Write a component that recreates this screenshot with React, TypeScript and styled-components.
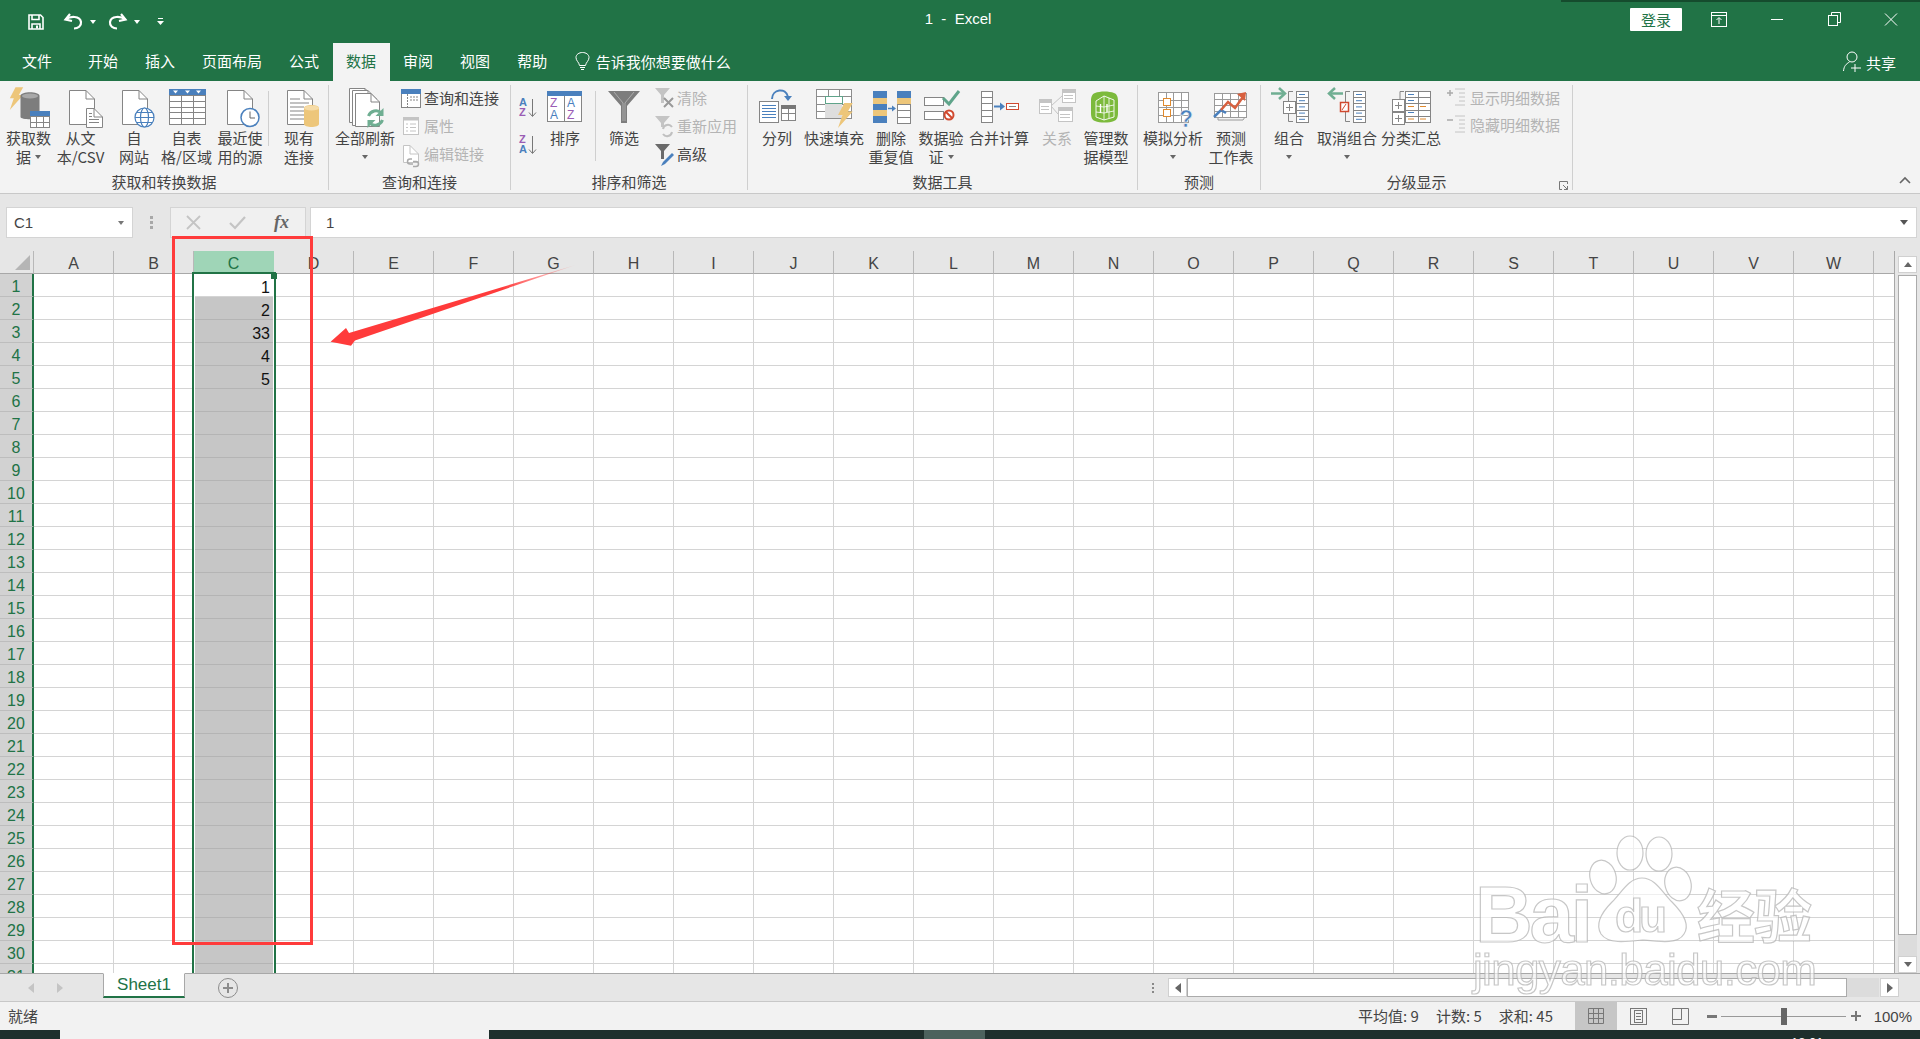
import React from 'react';
import styled, { createGlobalStyle } from 'styled-components';

const GlobalStyle = createGlobalStyle`
  html, body {
    margin: 0;
    padding: 0;
    background: #e6e6e6;
  }
  * {
    box-sizing: border-box;
  }
`;

const FONT = `"Noto Sans CJK SC", "Liberation Sans", sans-serif`;
const LATIN = `"Liberation Sans", "Noto Sans CJK SC", sans-serif`;
const GREEN = '#217346';
const BLUE = '#4a80bd';
const LINE = '#858585';
const ORANGE = '#edc67a';
const FADED = '#c4c4c4';

const Page = styled.div`
  position: relative;
  width: 1920px;
  height: 1039px;
  overflow: hidden;
  display: flex;
  flex-direction: column;
  font-family: ${FONT};
  font-size: 15px;
  color: #444;
  background: #e6e6e6;
`;

/* title bar */
const TitleBar = styled.div`
  position: relative;
  height: 43px;
  flex-shrink: 0;
  display: grid;
  grid-template-columns: 1fr auto 1fr;
  align-items: center;
  background: ${GREEN};
  color: #fff;
`;

const TopShadow = styled.div`
  position: absolute;
  top: 0;
  right: 0;
  width: 359px;
  height: 2px;
  background: rgba(0, 0, 0, 0.35);
`;

const Quick = styled.div`
  display: flex;
  align-items: center;
  padding-left: 28px;
`;

const QuickItem = styled.div<{ $ml: number }>`
  display: flex;
  margin-left: ${(p) => p.$ml}px;
`;

const WindowTitle = styled.div`
  font-family: ${LATIN};
  white-space: pre;
  padding-right: 4px;
  margin-top: -7px;
`;

const WindowControls = styled.div`
  display: flex;
  align-items: center;
  justify-content: flex-end;
  padding-right: 23px;
`;

const LoginButton = styled.div`
  width: 52px;
  height: 23px;
  margin-top: -5px;
  display: flex;
  align-items: center;
  justify-content: center;
  background: #fff;
  color: ${GREEN};
  border-radius: 1px;
`;

const WindowButton = styled.div<{ $ml: number }>`
  display: flex;
  margin-left: ${(p) => p.$ml}px;
  margin-top: -5px;
`;

/* tab row */
const TabRow = styled.div`
  height: 38px;
  flex-shrink: 0;
  display: flex;
  padding-left: 8.5px;
  background: ${GREEN};
  color: #fff;
`;

const RibbonTab = styled.div<{ $active?: boolean; $mr?: number }>`
  height: 38px;
  padding: 0 13.5px 3px;
  margin-right: ${(p) => p.$mr ?? 0}px;
  display: flex;
  align-items: center;
  white-space: nowrap;
  background: ${(p) => (p.$active ? '#f3f3f3' : 'transparent')};
  color: ${(p) => (p.$active ? GREEN : '#fff')};
`;

const TellMe = styled.div`
  display: flex;
  align-items: center;
  gap: 6px;
  margin-left: 14px;
  padding-bottom: 2px;
`;

const Share = styled.div`
  flex: 1;
  display: flex;
  align-items: center;
  justify-content: flex-end;
  gap: 4px;
  padding-right: 24px;
`;

/* ribbon */
const Ribbon = styled.div`
  height: 113px;
  flex-shrink: 0;
  display: flex;
  padding-top: 4px;
  background: #f3f3f3;
  border-bottom: 1px solid #c8c8c8;
`;

const Group = styled.div<{ $w: number }>`
  position: relative;
  width: ${(p) => p.$w}px;
  height: 105px;
  flex-shrink: 0;
  display: flex;
  flex-direction: column;
  border-right: 1px solid #cfcfcf;
`;

const GroupBody = styled.div<{ $pl: number }>`
  height: 83px;
  display: flex;
  padding-left: ${(p) => p.$pl}px;
`;

const GroupLabel = styled.div`
  margin-top: 3px;
  height: 19px;
  line-height: 22px;
  text-align: center;
  white-space: nowrap;
`;

const Launcher = styled.svg`
  position: absolute;
  right: 4px;
  bottom: 0;
`;

const RibbonEnd = styled.div`
  flex: 1;
  display: flex;
  justify-content: flex-end;
  align-items: flex-end;
  padding: 0 9px 9px 0;
`;

const LargeButton = styled.div<{ $w: number; $ml?: number }>`
  width: ${(p) => p.$w}px;
  margin-left: ${(p) => p.$ml ?? 0}px;
  flex-shrink: 0;
  display: flex;
  flex-direction: column;
  align-items: center;
  > svg {
    margin-bottom: -2px;
  }
`;

const LargeLabel = styled.div<{ $off?: boolean }>`
  height: 19px;
  line-height: 19px;
  white-space: nowrap;
  display: flex;
  align-items: center;
  gap: 4px;
  color: ${(p) => (p.$off ? '#b4b4b4' : '#444')};
`;

const Caret = styled.span<{ $c?: string }>`
  display: inline-block;
  width: 0;
  height: 0;
  border-left: 3.5px solid transparent;
  border-right: 3.5px solid transparent;
  border-top: 4px solid ${(p) => p.$c ?? '#666'};
`;

const Icon = styled.svg`
  display: block;
  flex-shrink: 0;
  overflow: visible;
`;

const Divider = styled.div<{ $h: number; $ml?: number; $mr?: number }>`
  width: 1px;
  height: ${(p) => p.$h}px;
  margin: 6px ${(p) => p.$mr ?? 0}px 0 ${(p) => p.$ml ?? 0}px;
  flex-shrink: 0;
  background: #cfcfcf;
`;

const SmallColumn = styled.div<{ $ml: number; $row?: number }>`
  margin-left: ${(p) => p.$ml}px;
  display: flex;
  flex-direction: column;
  > div {
    height: ${(p) => p.$row ?? 28}px;
  }
`;

const SmallButton = styled.div<{ $off?: boolean }>`
  display: flex;
  align-items: flex-start;
  gap: 3px;
  line-height: 25px;
  white-space: nowrap;
  color: ${(p) => (p.$off ? '#b4b4b4' : '#444')};
`;

const SortColumn = styled.div`
  width: 20px;
  margin-left: 7px;
  margin-right: 5px;
  flex-shrink: 0;
`;

/* formula bar */
const FormulaBar = styled.div`
  height: 57px;
  flex-shrink: 0;
  display: flex;
  padding: 13px 3px 13px 6px;
  background: #e6e6e6;
`;

const NameBox = styled.div`
  width: 127px;
  display: flex;
  align-items: center;
  justify-content: space-between;
  padding: 0 8px 0 7px;
  background: #fff;
  border: 1px solid #d4d4d4;
  font-family: ${LATIN};
`;

const GripDots = styled.div`
  width: 37px;
  display: flex;
  flex-direction: column;
  align-items: center;
  justify-content: center;
  gap: 2px;
  i {
    display: block;
    width: 3px;
    height: 3px;
    background: #a8a8a8;
  }
`;

const FunctionBox = styled.div`
  width: 136px;
  display: flex;
  align-items: center;
  padding-left: 15px;
  gap: 28px;
  background: #f0f0f0;
  border: 1px solid #d4d4d4;
`;

const FxText = styled.span`
  font-family: "Liberation Serif", serif;
  font-style: italic;
  font-weight: 700;
  font-size: 18px;
  color: #666;
`;

const FormulaInput = styled.div`
  flex: 1;
  margin-left: 4px;
  display: flex;
  align-items: center;
  justify-content: space-between;
  padding: 0 8px 0 15px;
  background: #fff;
  border: 1px solid #d4d4d4;
  font-family: ${LATIN};
`;

/* sheet */
const SheetArea = styled.div`
  height: 722px;
  flex-shrink: 0;
  display: flex;
`;

const GridPane = styled.div`
  width: 1895px;
  overflow: hidden;
  background: #fff;
  border-right: 1px solid #a8a8a8;
  font-family: ${LATIN};
  font-size: 16px;
`;

const HeaderRow = styled.div`
  display: flex;
  height: 23px;
  background: #e6e6e6;
`;

const Corner = styled.div`
  width: 34px;
  flex-shrink: 0;
  display: flex;
  align-items: flex-end;
  justify-content: flex-end;
  padding: 0 3px 3px 0;
  border-right: 1px solid #b8b8b8;
  border-bottom: 1px solid #a8a8a8;
`;

const ColumnHead = styled.div<{ $sel?: boolean }>`
  width: 80px;
  flex-shrink: 0;
  display: flex;
  align-items: center;
  justify-content: center;
  padding-top: 3px;
  background: ${(p) => (p.$sel ? '#9fd5b7' : '#e6e6e6')};
  color: ${(p) => (p.$sel ? GREEN : '#444')};
  border-right: 1px solid ${(p) => (p.$sel ? '#9fd5b7' : '#b8b8b8')};
  border-bottom: 1px solid #a8a8a8;
`;

const Row = styled.div`
  display: flex;
  height: 23px;
`;

const RowHead = styled.div`
  width: 34px;
  flex-shrink: 0;
  display: flex;
  align-items: center;
  justify-content: center;
  padding-top: 3px;
  background: #d2d2d2;
  color: ${GREEN};
  border-right: 2px solid ${GREEN};
  border-bottom: 1px solid #bdbdbd;
`;

const Cell = styled.div<{ $fill?: boolean }>`
  width: 80px;
  flex-shrink: 0;
  display: flex;
  align-items: center;
  justify-content: flex-end;
  padding: 5px 3px 0 0;
  color: #111;
  background: ${(p) => (p.$fill ? '#c6c6c6' : '#fff')};
  border-right: 1px solid #d4d4d4;
  border-bottom: 1px solid ${(p) => (p.$fill ? '#b4b4b4' : '#d4d4d4')};
`;

const VScroll = styled.div`
  flex: 1;
  display: flex;
  flex-direction: column;
  padding: 5px 3px 0 3px;
  background: #e6e6e6;
`;

const ScrollButton = styled.div`
  height: 17px;
  flex-shrink: 0;
  display: flex;
  align-items: center;
  justify-content: center;
  background: #fff;
  border: 1px solid #d0d0d0;
`;

const VThumb = styled.div`
  height: 660px;
  margin-top: 2px;
  background: #fff;
  border: 1px solid #ababab;
`;

const VTrack = styled.div`
  flex: 1;
  background: #dcdcdc;
`;

const Arrow = styled.span<{ $dir: 'up' | 'down' | 'left' | 'right'; $color?: string; $s?: number }>`
  display: inline-block;
  width: 0;
  height: 0;
  border: ${(p) => p.$s ?? 4}px solid transparent;
  ${(p) => {
    const side = { up: 'bottom', down: 'top', left: 'right', right: 'left' }[p.$dir];
    const off = { up: 'top', down: 'bottom', left: 'left', right: 'right' }[p.$dir];
    return `border-${side}: ${(p.$s ?? 4) + 1}px solid ${p.$color ?? '#666'}; border-${off}-width: 0;`;
  }}
`;

/* selection and drawn marks that lie over the grid */
const SelectionFrame = styled.div`
  position: absolute;
  left: 192px;
  top: 272px;
  width: 84px;
  height: 701px;
  border: solid ${GREEN};
  border-width: 2px 2px 0 2px;
  box-shadow: inset 1px 0 0 #fff, inset -1px 0 0 #fff;
  pointer-events: none;
`;

const FillHandle = styled.div`
  position: absolute;
  left: 271px;
  top: 273px;
  width: 6px;
  height: 6px;
  background: ${GREEN};
  pointer-events: none;
`;

const RedBox = styled.div`
  position: absolute;
  left: 172px;
  top: 236px;
  width: 141px;
  height: 709px;
  border: 3px solid #ff3b3b;
  pointer-events: none;
`;

const Marks = styled.svg`
  position: absolute;
  left: 0;
  top: 0;
  width: 1920px;
  height: 1039px;
  pointer-events: none;
`;

/* sheet tabs */
const TabsBar = styled.div`
  height: 29px;
  flex-shrink: 0;
  display: flex;
  background: #e6e6e6;
  border-top: 1px solid #a8a8a8;
  border-bottom: 1px solid #c8c8c8;
`;

const TabNav = styled.div`
  width: 103px;
  padding-left: 28px;
  display: flex;
  align-items: center;
  gap: 23px;
`;

const SheetTab = styled.div`
  width: 82px;
  height: 25px;
  margin-top: -1px;
  display: flex;
  align-items: center;
  justify-content: center;
  background: #fff;
  color: ${GREEN};
  font-family: ${LATIN};
  font-size: 17px;
  border: 1px solid #a8a8a8;
  border-top-color: #fff;
  border-bottom: 2px solid ${GREEN};
`;

const AddSheet = styled.div`
  margin: 4px 0 0 33px;
  display: flex;
`;

const TabsGrip = styled(GripDots)`
  width: 3px;
  height: 27px;
  margin-left: 913px;
  i {
    width: 2px;
    height: 2px;
    background: #888;
  }
`;

const HScroll = styled.div`
  margin: 4px 0 4px 14px;
  display: flex;
  width: 731px;
`;

const HButton = styled.div`
  width: 19px;
  display: flex;
  align-items: center;
  justify-content: center;
  background: #fff;
  border: 1px solid #d0d0d0;
`;

const HThumb = styled.div`
  width: 660px;
  background: #fff;
  border: 1px solid #ababab;
`;

const HTrack = styled.div`
  flex: 1;
  background: #dcdcdc;
  margin-right: 1px;
`;

/* status bar */
const StatusBar = styled.div`
  height: 28px;
  flex-shrink: 0;
  display: flex;
  align-items: stretch;
  padding: 0 8px;
  background: #f2f2f2;
`;

const Ready = styled.div`
  display: flex;
  align-items: center;
  flex: 1;
  padding-bottom: 2px;
`;

const Stats = styled.div`
  display: flex;
  align-items: center;
  gap: 17px;
  margin-right: 22px;
  padding-bottom: 2px;
`;

const ViewButton = styled.div<{ $active?: boolean }>`
  width: 42px;
  display: flex;
  align-items: center;
  justify-content: center;
  background: ${(p) => (p.$active ? '#c6c6c6' : 'transparent')};
`;

const Zoom = styled.div`
  display: flex;
  align-items: center;
  margin-left: 6px;
`;

const ZoomTrack = styled.div`
  position: relative;
  width: 125px;
  height: 1px;
  margin: 0 5px 0 4px;
  background: #999;
`;

const ZoomThumb = styled.div`
  position: absolute;
  left: 60px;
  top: -8px;
  width: 6px;
  height: 17px;
  background: #666;
`;

const ZoomValue = styled.div`
  width: 51px;
  text-align: right;
  font-family: ${LATIN};
`;

/* the strip of the desktop that shows under the window */
const Desktop = styled.div`
  height: 9px;
  flex-shrink: 0;
  position: relative;
  display: flex;
  overflow: hidden;
  background: #1e2f2c;
`;

const DesktopWindow = styled.div<{ $w: number; $ml: number; $bg: string }>`
  width: ${(p) => p.$w}px;
  margin-left: ${(p) => p.$ml}px;
  background: ${(p) => p.$bg};
`;

const Clock = styled.div`
  position: absolute;
  left: 1791px;
  top: 5px;
  color: #fff;
  font-family: ${LATIN};
  font-size: 13px;
  line-height: 15px;
`;

/* drawing helpers */
const Tbl = ({ x, y, w, h, cols = 1, rows = 1, c = LINE, fill = '#fff' }: { x: number; y: number; w: number; h: number; cols?: number; rows?: number; c?: string; fill?: string }) => (
  <g stroke={c} fill="none">
    <rect x={x + 0.5} y={y + 0.5} width={w} height={h} fill={fill} />
    {Array.from({ length: cols - 1 }, (_, i) => {
      const cx = Math.round(x + ((i + 1) * w) / cols) + 0.5;
      return <line key={i} x1={cx} x2={cx} y1={y} y2={y + h} />;
    })}
    {Array.from({ length: rows - 1 }, (_, i) => {
      const cy = Math.round(y + ((i + 1) * h) / rows) + 0.5;
      return <line key={i} x1={x} x2={x + w} y1={cy} y2={cy} />;
    })}
  </g>
);

const Doc = ({ x, y, w, h, c = LINE, lines = 0 }: { x: number; y: number; w: number; h: number; c?: string; lines?: number }) => (
  <g stroke={c} fill="#fff">
    <path d={`M${x + 0.5} ${y + 0.5}H${x + w - 8}L${x + w + 0.5} ${y + 9}V${y + h + 0.5}H${x + 0.5}Z`} />
    <path d={`M${x + w - 8} ${y + 0.5}V${y + 9}H${x + w + 0.5}`} fill="none" />
    {Array.from({ length: lines }, (_, i) => (
      <line key={i} x1={x + 3} x2={x + w - (i < 2 ? 10 : 3)} y1={y + 5.5 + i * 3} y2={y + 5.5 + i * 3} />
    ))}
  </g>
);

const Large = ({ children }: { children: React.ReactNode }) => (
  <Icon width={48} height={45} viewBox="0 1 48 45">
    {children}
  </Icon>
);

const Small = ({ children, w = 20 }: { children: React.ReactNode; w?: number }) => (
  <Icon width={w} height={28} viewBox={`0 0 ${w} 28`}>
    {children}
  </Icon>
);

const Bolt = ({ t, fill = ORANGE }: { t: string; fill?: string }) => <polygon transform={t} fill={fill} points="5.7,0 13.4,0 9,7.7 13.4,7.7 0,22.7 4,11 0,11" />;

const Copy = ({ x, y, c }: { x: number; y: number; c: string }) => (
  <g>
    <rect x={x + 0.5} y={y + 0.5} width={12} height={12} fill="#fff" stroke={c} />
    <path d={`M${x + 3} ${y + 6.5}h7M${x + 6.5} ${y + 3}v7`} stroke={c} />
  </g>
);

const Stack = ({ x, rows = 5 }: { x: number; rows?: number }) => (
  <g>
    <Tbl x={x} y={7} w={12} h={31} rows={rows} c={LINE} />
    {Array.from({ length: rows }, (_, i) => (
      <line key={i} x1={x + 3} x2={x + 9} y1={10.5 + i * 6.2} y2={10.5 + i * 6.2} stroke={BLUE} />
    ))}
  </g>
);

// the last column only shows its first pixels, so it carries no letter
const COLUMNS = 'ABCDEFGHIJKLMNOPQRSTUVW'.split('').concat('');
const ROWS = Array.from({ length: 31 }, (_, i) => i + 1);
const VALUES: Record<number, string> = { 1: '1', 2: '2', 3: '33', 4: '4', 5: '5' };

const WATERMARK = {
  fill: 'rgba(255,255,255,0.62)',
  stroke: 'rgba(175,175,175,0.7)',
  strokeWidth: 1.2,
  filter: 'url(#soft)',
};

const App: React.FC = () => {
  return (
    <Page>
      <GlobalStyle />
      <TitleBar>
        <TopShadow />
        <Quick>
          <QuickItem $ml={0}>
            <Icon width={16} height={16} viewBox="0 0 16 16" fill="none" stroke="#fff" strokeWidth={1.6}>
              <path d="M1 1h11.5L15 3.5V15H1Z" />
              <path d="M4 1v4.5h7V1M4 15v-5h8v5" />
              <rect x="8" y="11.5" width="2" height="3" fill="#fff" stroke="none" />
            </Icon>
          </QuickItem>
          <QuickItem $ml={20}>
            <Icon width={19} height={17} viewBox="0 0 19 17" fill="none" stroke="#fff" strokeWidth={2.2}>
              <path d="M6 1L1.5 6.5L8 8" />
              <path d="M2 6.5C6 3 16 2.500 17 9C17.500 13 14 15.500 10 15.500" />
            </Icon>
          </QuickItem>
          <QuickItem $ml={7}>
            <Caret $c="#fff" />
          </QuickItem>
          <QuickItem $ml={12}>
            <Icon width={19} height={17} viewBox="0 0 19 17" fill="none" stroke="#fff" strokeWidth={2.2}>
              <path d="M13 1L17.500 6.500L11 8" />
              <path d="M17 6.500C13 3 3 2.500 2 9C1.500 13 5 15.500 9 15.500" />
            </Icon>
          </QuickItem>
          <QuickItem $ml={7}>
            <Caret $c="#fff" />
          </QuickItem>
          <QuickItem $ml={17}>
            <Icon width={7} height={8} viewBox="0 0 7 8" fill="#fff">
              <rect x="1" y="0" width="5" height="1" />
              <polygon points="0,3 7,3 3.500,7" />
            </Icon>
          </QuickItem>
        </Quick>
        <WindowTitle>1  -  Excel</WindowTitle>
        <WindowControls>
          <LoginButton>登录</LoginButton>
          <WindowButton $ml={29}>
            <Icon width={16} height={15} viewBox="0 0 16 15" fill="none" stroke="#fff">
              <rect x="0.500" y="0.500" width="15" height="14" />
              <path d="M0 3.500h16M8 12V6M5.500 8L8 5.500L10.500 8" />
            </Icon>
          </WindowButton>
          <WindowButton $ml={44}>
            <Icon width={12} height={12} viewBox="0 0 12 12" stroke="#fff">
              <line x1="0" x2="12" y1="6.500" y2="6.500" />
            </Icon>
          </WindowButton>
          <WindowButton $ml={45}>
            <Icon width={13} height={14} viewBox="0 0 13 14" fill="none" stroke="#fff">
              <rect x="0.500" y="3.500" width="9" height="10" />
              <path d="M3.500 3.500V0.500H12.500V10.500H9.500" />
            </Icon>
          </WindowButton>
          <WindowButton $ml={44}>
            <Icon width={12} height={13} viewBox="0 0 12 13" stroke="#fff">
              <path d="M0 0.500L12 12.500M12 0.500L0 12.500" />
            </Icon>
          </WindowButton>
        </WindowControls>
      </TitleBar>

      <TabRow>
        <RibbonTab $mr={9}>文件</RibbonTab>
        <RibbonTab>开始</RibbonTab>
        <RibbonTab>插入</RibbonTab>
        <RibbonTab>页面布局</RibbonTab>
        <RibbonTab>公式</RibbonTab>
        <RibbonTab $active>数据</RibbonTab>
        <RibbonTab>审阅</RibbonTab>
        <RibbonTab>视图</RibbonTab>
        <RibbonTab>帮助</RibbonTab>
        <TellMe>
          <Icon width={15} height={19} viewBox="0 0 15 19" fill="none" stroke="#fff">
            <path d="M4.500 13.500C4 10 1 9 1 5.500C1 2.500 4 0.500 7.500 0.500C11 0.500 14 2.500 14 5.500C14 9 11 10 10.500 13.500Z" />
            <path d="M5 15.500h5M6 17.500h3" />
          </Icon>
          告诉我你想要做什么
        </TellMe>
        <Share>
          <Icon width={19} height={22} viewBox="0 0 19 22" fill="none" stroke="#fff">
            <circle cx="9" cy="6" r="5" />
            <path d="M0.500 20C1 15 3 13 6.500 11M12 13V21M8 17H18" />
          </Icon>
          共享
        </Share>
      </TabRow>

      <Ribbon>
        <Group $w={329}>
          <GroupBody $pl={3}>
            <LargeButton $w={51}>
              <Large>
                <Bolt t="translate(4.800 3.300)" />
                <path d="M15.500 12c0-5 19-5 19 0v21c0 3-19 3-19 0Z" fill="#7d7d7d" />
                <ellipse cx="25" cy="12" rx="8" ry="2.500" fill="#a8a8a8" />
                <Tbl x={25} y={27} w={19} h={16} cols={3} rows={3} />
                <rect x="25" y="27" width="20" height="5" fill={BLUE} />
              </Large>
              <LargeLabel>获取数</LargeLabel>
              <LargeLabel>据<Caret /></LargeLabel>
            </LargeButton>
            <LargeButton $w={53}>
              <Large>
                <Doc x={12} y={6} w={25} h={34} />
                <Doc x={29} y={24} w={16} h={19} lines={4} c={LINE} />
              </Large>
              <LargeLabel>从文</LargeLabel>
              <LargeLabel>本/CSV</LargeLabel>
            </LargeButton>
            <LargeButton $w={54}>
              <Large>
                <Doc x={12} y={6} w={25} h={34} />
                <g fill="#fff" stroke={BLUE} strokeWidth={1.200}>
                  <circle cx="34.500" cy="33.500" r="9.500" />
                  <ellipse cx="34.500" cy="33.500" rx="4" ry="9.500" />
                  <path d="M25 33.500h19M26.500 28.500h16M26.500 38.500h16" />
                </g>
              </Large>
              <LargeLabel>自</LargeLabel>
              <LargeLabel>网站</LargeLabel>
            </LargeButton>
            <LargeButton $w={51}>
              <Large>
                <Tbl x={6} y={5} w={36} h={35} cols={3} rows={6} />
                <rect x="6" y="5" width="37" height="6" fill={BLUE} />
                <path d="M10 6.500h5l-2.500 3ZM22 6.500h5l-2.500 3ZM33 6.500h5l-2.500 3Z" fill="#fff" />
              </Large>
              <LargeLabel>自表</LargeLabel>
              <LargeLabel>格/区域</LargeLabel>
            </LargeButton>
            <LargeButton $w={56}>
              <Large>
                <Doc x={11} y={6} w={25} h={34} />
                <circle cx="34" cy="33.500" r="9" fill="#fff" stroke={BLUE} strokeWidth={1.500} />
                <path d="M34 27.500v6.500h5" fill="none" stroke="#666" />
              </Large>
              <LargeLabel>最近使</LargeLabel>
              <LargeLabel>用的源</LargeLabel>
            </LargeButton>
            <Divider $h={55} />
            <LargeButton $w={58} $ml={1}>
              <Large>
                <Doc x={12} y={6} w={25} h={34} lines={0} />
                <path d="M15 15h10M15 19h19M15 23h14M15 27h14M15 31h14M15 35h14" stroke={LINE} />
                <path d="M29 24c0-4 15-4 15 0v16c0 4-15 4-15 0Z" fill={ORANGE} />
                <ellipse cx="36.500" cy="24" rx="7.500" ry="2.500" fill="#f6dca8" />
              </Large>
              <LargeLabel>现有</LargeLabel>
              <LargeLabel>连接</LargeLabel>
            </LargeButton>
          </GroupBody>
          <GroupLabel>获取和转换数据</GroupLabel>
        </Group>

        <Group $w={182}>
          <GroupBody $pl={4}>
            <LargeButton $w={64}>
              <Large>
                <Doc x={8} y={4} w={24} h={34} />
                <Doc x={11} y={6} w={24} h={35} />
                <Doc x={14} y={9} w={24} h={33} />
                <g fill="none" stroke="#6fae92" strokeWidth={3}>
                  <path d="M27.500 32a8 8 0 0 1 13-3" />
                  <path d="M41.500 36a8 8 0 0 1-13 3" />
                </g>
                <path d="M42.500 24v8h-8ZM26.500 44v-8h8Z" fill="#6fae92" />
              </Large>
              <LargeLabel>全部刷新</LargeLabel>
              <LargeLabel><Caret /></LargeLabel>
            </LargeButton>
            <SmallColumn $ml={4}>
              <SmallButton>
                <Small>
                  <Tbl x={0} y={4} w={19} h={18} />
                  <rect x="0" y="4" width="20" height="5" fill={BLUE} />
                  <path d="M6.500 9v13M9 12h8M9 15h8" stroke={LINE} strokeDasharray="2 1" fill="none" />
                </Small>
                查询和连接
              </SmallButton>
              <SmallButton $off>
                <Small>
                  <rect x="2.500" y="4.500" width="15" height="17" fill="#fff" stroke={FADED} />
                  <rect x="2.500" y="4.500" width="15" height="3" fill={FADED} />
                  <path d="M5 11h2M9 11h6M5 14.500h2M9 14.500h6M5 18h2M9 18h6" stroke={FADED} />
                </Small>
                属性
              </SmallButton>
              <SmallButton $off>
                <Small>
                  <Doc x={2} y={4} w={15} h={17} c={FADED} />
                  <path d="M11 18h-2a2.500 2.500 0 0 0 0 5h3M12 20.500h3a2.500 2.500 0 0 1 0 5h-3" fill="none" stroke="#aaa" strokeWidth={1.500} />
                </Small>
                编辑链接
              </SmallButton>
            </SmallColumn>
          </GroupBody>
          <GroupLabel>查询和连接</GroupLabel>
        </Group>

        <Group $w={237}>
          <GroupBody $pl={0}>
            <SortColumn>
              <Icon width={20} height={45} viewBox="0 0 20 45" fontFamily={LATIN} fontWeight={700} fontSize={11}>
                <text x="1" y="21" fill={BLUE}>A</text>
                <text x="1" y="31" fill="#9a5cb4">Z</text>
                <path d="M14.500 14v17M11 27.500l3.500 4l3.500-4" fill="none" stroke="#777" />
              </Icon>
              <Icon width={20} height={38} viewBox="0 0 20 38" fontFamily={LATIN} fontWeight={700} fontSize={11}>
                <text x="1" y="13" fill="#9a5cb4">Z</text>
                <text x="1" y="23" fill={BLUE}>A</text>
                <path d="M14.500 6v17M11 19.500l3.500 4l3.500-4" fill="none" stroke="#777" />
              </Icon>
            </SortColumn>
            <LargeButton $w={44}>
              <Large>
                <Tbl x={6} y={7} w={34} h={30} cols={2} />
                <rect x="6" y="7" width="35" height="5" fill={BLUE} />
                <g fontFamily={LATIN} fontSize={12} fontWeight={400}>
                  <text x="9" y="23" fill="#9a5cb4">Z</text>
                  <text x="9" y="35" fill={BLUE}>A</text>
                  <text x="26" y="23" fill={BLUE}>A</text>
                  <text x="26" y="35" fill="#9a5cb4">Z</text>
                </g>
              </Large>
              <LargeLabel>排序</LargeLabel>
            </LargeButton>
            <Divider $h={70} $ml={8} $mr={7} />
            <LargeButton $w={42}>
              <Large>
                <path d="M8 7h32L27 22v17h-6V22Z" fill="#7d7d7d" />
                <path d="M14 8l9 11v18M34 8l-9 11v18" fill="none" stroke="#b8b8b8" strokeWidth={0.800} />
              </Large>
              <LargeLabel>筛选</LargeLabel>
            </LargeButton>
            <SmallColumn $ml={9}>
              <SmallButton $off>
                <Small>
                  <path d="M1 3h15l-6 7v8H7v-8Z" fill={FADED} />
                  <path d="M10 13l9 9M19 13l-9 9" stroke="#999" strokeWidth={2} />
                </Small>
                清除
              </SmallButton>
              <SmallButton $off>
                <Small>
                  <path d="M1 3h15l-6 7v4H7v-4Z" fill={FADED} />
                  <path d="M9 16a5 5 0 0 1 9-2M18 19a5 5 0 0 1-9 2" fill="none" stroke="#c0c0c0" strokeWidth={2} />
                </Small>
                重新应用
              </SmallButton>
              <SmallButton>
                <Small>
                  <path d="M1 3h15l-6 7v8H7v-8Z" fill="#6a6a6a" />
                  <path d="M7 25l2-4l9-9l2 2l-9 9Z" fill={BLUE} />
                </Small>
                高级
              </SmallButton>
            </SmallColumn>
          </GroupBody>
          <GroupLabel>排序和筛选</GroupLabel>
        </Group>

        <Group $w={390}>
          <GroupBody $pl={7}>
            <LargeButton $w={44}>
              <Large>
                <rect x="6.500" y="17.500" width="19" height="21" fill="#fff" stroke={LINE} />
                <path d="M9 21.500h14M9 24.500h14M9 27.500h14M9 30.500h14M9 33.500h14" stroke={BLUE} />
                <Tbl x={28} y={21} w={14} h={15} cols={2} rows={2} />
                <rect x="28" y="21" width="15" height="4" fill="#777" />
                <path d="M19 15C19 5 33 3 35 13" fill="none" stroke={BLUE} strokeWidth={2} />
                <path d="M31 12h8l-4 5Z" fill={BLUE} />
              </Large>
              <LargeLabel>分列</LargeLabel>
            </LargeButton>
            <LargeButton $w={70}>
              <Large>
                <Tbl x={6} y={5} w={35} h={29} cols={3} rows={4} c="#8c8c8c" />
                <rect x="15" y="20" width="17" height="14" fill="#dedede" />
                <rect x="15.500" y="12.500" width="17" height="7" fill="#fff" stroke="#5fa48a" />
                <Bolt t="translate(28 19) scale(1.100)" />
              </Large>
              <LargeLabel>快速填充</LargeLabel>
            </LargeButton>
            <LargeButton $w={44}>
              <Large>
                <rect x="6" y="7" width="14" height="32" fill={BLUE} />
                <rect x="6" y="14" width="14" height="6" fill={ORANGE} />
                <rect x="6" y="26" width="14" height="6" fill={ORANGE} />
                <Tbl x={30} y={7} w={13} h={32} rows={5} />
                <rect x="30" y="7" width="14" height="7" fill={BLUE} />
                <rect x="30" y="14" width="14" height="6" fill={ORANGE} />
                <path d="M21 24.500h5" stroke={BLUE} strokeWidth={1.500} />
                <path d="M25 21.500l4 3l-4 3Z" fill={BLUE} />
              </Large>
              <LargeLabel>删除</LargeLabel>
              <LargeLabel>重复值</LargeLabel>
            </LargeButton>
            <LargeButton $w={56}>
              <Large>
                <rect x="7.500" y="13.500" width="19" height="8" fill="#fff" stroke={LINE} />
                <rect x="7.500" y="27.500" width="19" height="8" fill="#fff" stroke={LINE} />
                <path d="M26 14l6 6l10-13" fill="none" stroke="#5fa48a" strokeWidth={3} />
                <circle cx="32" cy="31" r="4.500" fill="#fff" stroke="#d0492f" strokeWidth={2} />
                <line x1="29" y1="28" x2="35" y2="34" stroke="#d0492f" strokeWidth={2} />
              </Large>
              <LargeLabel>数据验</LargeLabel>
              <LargeLabel>证<Caret /></LargeLabel>
            </LargeButton>
            <LargeButton $w={60}>
              <Large>
                <Tbl x={6} y={7} w={11} h={31} rows={5} />
                <path d="M19 22.500h7" stroke={BLUE} strokeWidth={2} />
                <path d="M25 18.500l5 4l-5 4Z" fill={BLUE} />
                <rect x="31.500" y="19.500" width="12" height="6" fill="#fff" stroke="#d0492f" />
                <path d="M34 22.500h7" stroke={LINE} />
              </Large>
              <LargeLabel>合并计算</LargeLabel>
            </LargeButton>
            <LargeButton $w={56}>
              <Large>
                <path d="M18 22L29 12M18 22L25 30" fill="none" stroke={FADED} />
                <Tbl x={6} y={15} w={12} h={14} c={FADED} />
                <rect x="6" y="15" width="13" height="4" fill={FADED} />
                <path d="M8 22.500h8M8 25.500h8" stroke={FADED} />
                <Tbl x={29} y={5} w={13} h={13} c={FADED} />
                <rect x="29" y="5" width="14" height="4" fill={FADED} />
                <path d="M31 11.500h9M31 14.500h9" stroke={FADED} />
                <Tbl x={25} y={23} w={14} h={14} c={FADED} />
                <rect x="25" y="23" width="15" height="4" fill={FADED} />
                <path d="M27 30.500h10M27 33.500h10" stroke={FADED} />
              </Large>
              <LargeLabel $off>关系</LargeLabel>
            </LargeButton>
            <LargeButton $w={42}>
              <Large>
                <path d="M13 9C18 7 27 7 32 9C35 10 36 13 36 17V29C36 33 35 36 32 37C27 39 18 39 13 37C10 36 9 33 9 29V17C9 13 10 10 13 9Z" fill="#7cba3c" />
                <path d="M14 17l8-5l10 4v17l-10 3l-8-3Z" fill="none" stroke="#fff" strokeWidth={0.900} />
                <path d="M22 12v24M14 22l8 1l10-2M14 28l8 1l10-2M27 14v20" fill="none" stroke="#fff" strokeWidth={0.800} />
                <path d="M18.500 20v9M25 28v-8" stroke="#fff" strokeWidth={1.400} />
              </Large>
              <LargeLabel>管理数</LargeLabel>
              <LargeLabel>据模型</LargeLabel>
            </LargeButton>
          </GroupBody>
          <GroupLabel>数据工具</GroupLabel>
        </Group>

        <Group $w={123}>
          <GroupBody $pl={2}>
            <LargeButton $w={66}>
              <Large>
                <Tbl x={9} y={8} w={30} h={30} cols={4} rows={4} c="#9a9a9a" />
                <rect x="14.500" y="14.500" width="7" height="7" fill="#fff" stroke="#e08a2e" />
                <rect x="14.500" y="25.500" width="7" height="7" fill="#fff" stroke="#e08a2e" />
                <text x="30" y="43" fontFamily={LATIN} fontSize={23} fontWeight={700} fill={BLUE} stroke="#f3f3f3" strokeWidth={0.600}>?</text>
              </Large>
              <LargeLabel>模拟分析</LargeLabel>
              <LargeLabel><Caret /></LargeLabel>
            </LargeButton>
            <LargeButton $w={50}>
              <Large>
                <Tbl x={7} y={9} w={32} h={24} cols={4} rows={4} c="#9a9a9a" />
                <path d="M11 33v3h25l2-3" fill="none" stroke="#9a9a9a" />
                <path d="M7 33l7-7l5 3" fill="none" stroke={BLUE} strokeWidth={2.500} />
                <path d="M14 26l7-8l7 6l8-11" fill="none" stroke="#d8603f" strokeWidth={2.500} />
                <path d="M30 10l9-2l-1 9Z" fill="#d8603f" />
              </Large>
              <LargeLabel>预测</LargeLabel>
              <LargeLabel>工作表</LargeLabel>
            </LargeButton>
          </GroupBody>
          <GroupLabel>预测</GroupLabel>
        </Group>

        <Group $w={312}>
          <GroupBody $pl={8}>
            <LargeButton $w={40}>
              <Large>
                <path d="M6 9.500h12" stroke="#6fae92" strokeWidth={2.500} />
                <path d="M14 4l6 5.500l-6 5.500" fill="none" stroke="#6fae92" strokeWidth={2.500} />
                <Stack x={31} />
                <path d="M28 7.500h-4.500v30H28" fill="none" stroke={LINE} />
                <Copy x={18} y={17} c={LINE} />
              </Large>
              <LargeLabel>组合</LargeLabel>
              <LargeLabel><Caret /></LargeLabel>
            </LargeButton>
            <LargeButton $w={76}>
              <Large>
                <path d="M8 9.500h12" stroke="#6fae92" strokeWidth={2.500} />
                <path d="M12 4l-6 5.500l6 5.500" fill="none" stroke="#6fae92" strokeWidth={2.500} />
                <Stack x={30} />
                <path d="M27 7.500h-4.500v30H27" fill="none" stroke={LINE} />
                <rect x="17.500" y="18.500" width="8" height="9" fill="#fff" stroke="#d0492f" strokeWidth={1.500} />
                <path d="M19 26l4-6" stroke="#d0492f" />
              </Large>
              <LargeLabel>取消组合</LargeLabel>
              <LargeLabel><Caret /></LargeLabel>
            </LargeButton>
            <LargeButton $w={52}>
              <Large>
                <Tbl x={18} y={7} w={25} h={31} cols={2} rows={5} />
                <path d="M21 10.500h6M21 16.500h6M21 28.500h6" stroke={BLUE} />
                <path d="M21 22.500h6M33 22.500h6M21 35h6M33 35h6" stroke="#e08a2e" />
                <path d="M13 7.500h4M13 7.500v8" fill="none" stroke={LINE} />
                <Copy x={5} y={15} c={LINE} />
                <Copy x={5} y={28} c={LINE} />
              </Large>
              <LargeLabel>分类汇总</LargeLabel>
            </LargeButton>
            <SmallColumn $ml={10} $row={27}>
              <SmallButton $off>
                <Small>
                  <path d="M0 8h6M3 5v6" stroke="#aaa" strokeWidth={1.500} />
                  <path d="M8 4h10M12 8h6M12 12h6M12 16h6M8 20h10" stroke={FADED} />
                </Small>
                显示明细数据
              </SmallButton>
              <SmallButton $off>
                <Small>
                  <path d="M0 8h6" stroke="#aaa" strokeWidth={1.500} />
                  <path d="M8 4h10M12 8h6M12 12h6M12 16h6M8 20h10" stroke={FADED} />
                </Small>
                隐藏明细数据
              </SmallButton>
            </SmallColumn>
          </GroupBody>
          <GroupLabel>分级显示</GroupLabel>
          <Launcher width={9} height={9} viewBox="0 0 9 9" fill="none" stroke="#777">
            <path d="M8.500 3V0.500H0.500V8.500H3M4 4l4.500 4.500M8.500 5v3.500H5" />
          </Launcher>
        </Group>

        <RibbonEnd>
          <Icon width={12} height={7} viewBox="0 0 12 7" fill="none" stroke="#666" strokeWidth={1.600}>
            <path d="M1 6l5-5l5 5" />
          </Icon>
        </RibbonEnd>
      </Ribbon>

      <FormulaBar>
        <NameBox>
          C1
          <Arrow $dir="down" $s={3.5} $color="#777" />
        </NameBox>
        <GripDots>
          <i />
          <i />
          <i />
        </GripDots>
        <FunctionBox>
          <Icon width={15} height={15} viewBox="0 0 15 15" stroke="#c4c4c4" strokeWidth={1.800}>
            <path d="M1 1l13 13M14 1L1 14" />
          </Icon>
          <Icon width={17} height={14} viewBox="0 0 17 14" fill="none" stroke="#c4c4c4" strokeWidth={2.200}>
            <path d="M1 7l5 5l10-11" />
          </Icon>
          <FxText>fx</FxText>
        </FunctionBox>
        <FormulaInput>
          1
          <Arrow $dir="down" $s={4} $color="#555" />
        </FormulaInput>
      </FormulaBar>

      <SheetArea>
        <GridPane>
          <HeaderRow>
            <Corner>
              <Icon width={15} height={15} viewBox="0 0 15 15">
                <polygon points="15,0 15,15 0,15" fill="#b5b5b5" />
              </Icon>
            </Corner>
            {COLUMNS.map((c) => (
              <ColumnHead key={c} $sel={c === 'C'}>
                {c}
              </ColumnHead>
            ))}
          </HeaderRow>
          {ROWS.map((r) => (
            <Row key={r}>
              <RowHead>{r}</RowHead>
              {COLUMNS.map((c) => (
                <Cell key={c} $fill={c === 'C' && r > 1}>
                  {c === 'C' ? VALUES[r] : null}
                </Cell>
              ))}
            </Row>
          ))}
        </GridPane>
        <VScroll>
          <ScrollButton>
            <Arrow $dir="up" $color="#666" />
          </ScrollButton>
          <VThumb />
          <VTrack />
          <ScrollButton>
            <Arrow $dir="down" $color="#666" />
          </ScrollButton>
        </VScroll>
      </SheetArea>

      <TabsBar>
        <TabNav>
          <Arrow $dir="left" $s={5} $color="#c4c4c4" />
          <Arrow $dir="right" $s={5} $color="#c4c4c4" />
        </TabNav>
        <SheetTab>Sheet1</SheetTab>
        <AddSheet>
          <Icon width={20} height={20} viewBox="0 0 20 20" fill="none" stroke="#8c8c8c">
            <circle cx="10" cy="10" r="9.500" />
            <path d="M10 5v10M5 10h10" strokeWidth={2} />
          </Icon>
        </AddSheet>
        <TabsGrip>
          <i />
          <i />
          <i />
        </TabsGrip>
        <HScroll>
          <HButton>
            <Arrow $dir="left" $s={5} $color="#666" />
          </HButton>
          <HThumb />
          <HTrack />
          <HButton>
            <Arrow $dir="right" $s={5} $color="#666" />
          </HButton>
        </HScroll>
      </TabsBar>

      <StatusBar>
        <Ready>就绪</Ready>
        <Stats>
          <span>平均值: 9</span>
          <span>计数: 5</span>
          <span>求和: 45</span>
        </Stats>
        <ViewButton $active>
          <Icon width={16} height={16} viewBox="0 0 16 16" fill="none" stroke="#777">
            <path d="M0.500 0.500h15v15h-15ZM5.500 0v16M10.500 0v16M0 5.500h16M0 10.500h16" />
          </Icon>
        </ViewButton>
        <ViewButton>
          <Icon width={17} height={17} viewBox="0 0 17 17" fill="none" stroke="#777">
            <rect x="0.500" y="0.500" width="16" height="16" />
            <rect x="4.500" y="2.500" width="8" height="12" />
            <path d="M6 5.500h5M6 8.500h5M6 11.500h5" />
          </Icon>
        </ViewButton>
        <ViewButton>
          <Icon width={17} height={17} viewBox="0 0 17 17" fill="none" stroke="#777">
            <path d="M0.500 0.500h16v16h-16ZM0 11.500h9.500V0M9.500 11.500V0" />
          </Icon>
        </ViewButton>
        <Zoom>
          <Icon width={10} height={3} viewBox="0 0 10 3" fill="#777">
            <rect width="10" height="3" />
          </Icon>
          <ZoomTrack>
            <ZoomThumb />
          </ZoomTrack>
          <Icon width={10} height={10} viewBox="0 0 10 10" fill="#777">
            <path d="M0 4h4V0h2v4h4v2H6v4H4V6H0Z" />
          </Icon>
          <ZoomValue>100%</ZoomValue>
        </Zoom>
      </StatusBar>

      <Desktop>
        <DesktopWindow $w={429} $ml={60} $bg="#f2f2f2" />
        <DesktopWindow $w={61} $ml={435} $bg="#4c625d" />
        <Clock>18:01</Clock>
      </Desktop>

      <SelectionFrame />
      <FillHandle />
      <RedBox />

      <Marks viewBox="0 0 1920 1039">
        <defs>
          <linearGradient id="tail" x1="575" y1="265" x2="331" y2="342" gradientUnits="userSpaceOnUse">
            <stop offset="0" stopColor="#ff3b3b" stopOpacity="0.1" />
            <stop offset="0.3" stopColor="#ff3b3b" />
          </linearGradient>
          <filter id="soft">
            <feGaussianBlur stdDeviation="0.5" />
          </filter>
        </defs>
        <polygon fill="url(#tail)" points="575.500,265 355,340.500 351,345.700 330.600,341.700 346,328 349,333" />
        <g {...WATERMARK}>
          <text x="1475" y="942" fontFamily={LATIN} fontWeight={700} fontSize={80} textLength={118}>Bai</text>
          <ellipse cx="1603" cy="877" rx="13" ry="17" transform="rotate(-15 1603 877)" />
          <ellipse cx="1630" cy="853" rx="13" ry="17" />
          <ellipse cx="1659" cy="854" rx="13" ry="17" />
          <ellipse cx="1678" cy="884" rx="13" ry="17" transform="rotate(-15 1678 884)" />
          <path d="M1642 878C1655 878 1662 892 1672 902C1684 914 1690 925 1684 934C1678 944 1662 942 1642 940C1625 942 1608 944 1601 934C1595 924 1602 912 1612 902C1622 892 1629 878 1642 878Z" />
          <text x="1615" y="932" fontFamily={LATIN} fontWeight={700} fontSize={46} textLength={52}>du</text>
          <text x="1697" y="938" fontFamily={FONT} fontWeight={700} fontSize={58} textLength={115}>经验</text>
          <text x="1473" y="985" fontFamily={LATIN} fontSize={44} textLength={344}>jingyan.baidu.com</text>
        </g>
      </Marks>
    </Page>
  );
};

export default App;
